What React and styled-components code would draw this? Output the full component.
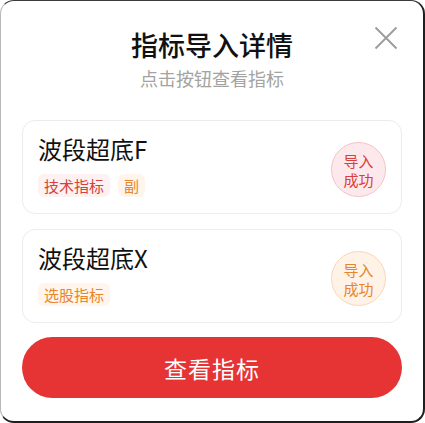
import React from "react";
import styled, { createGlobalStyle } from "styled-components";

const GlobalStyle = createGlobalStyle`
  html, body {
    margin: 0;
    padding: 0;
    background: #ffffff;
  }
  body {
    font-family: "Noto Sans CJK SC", "Noto Sans", sans-serif;
  }
  * {
    box-sizing: border-box;
  }
`;

const Dialog = styled.div`
  width: 425px;
  height: 423px;
  background: #ffffff;
  border-radius: 14px;
  border-style: solid;
  border-width: 1px 2px 2px 1px;
  border-color: #3a3a3a #1f1f1f #1f1f1f #b8b8b8;
  padding: 0 21px;
  display: flex;
  flex-direction: column;
  position: relative;
`;

const Header = styled.div`
  display: flex;
  flex-direction: column;
  align-items: center;
  padding-top: 26px;
`;

const Title = styled.h2`
  margin: 0;
  font-size: 27px;
  line-height: 36px;
  font-weight: 500;
  color: #111111;
`;

const Subtitle = styled.div`
  margin-top: 3px;
  font-size: 18px;
  line-height: 24px;
  color: #a3a3a3;
`;

const CloseButton = styled.button`
  position: absolute;
  top: 24px;
  right: 24px;
  width: 26px;
  height: 26px;
  padding: 0;
  border: none;
  background: transparent;
  display: flex;
  align-items: center;
  justify-content: center;
`;

const List = styled.div`
  margin-top: 30px;
  display: flex;
  flex-direction: column;
  gap: 15px;
`;

const Card = styled.div`
  display: flex;
  align-items: center;
  justify-content: space-between;
  border: 1px solid #ececec;
  border-radius: 13px;
  padding: 13px 15px 16px 15px;
`;

const Info = styled.div`
  display: flex;
  flex-direction: column;
  gap: 10px;
`;

const Name = styled.div`
  font-size: 24px;
  line-height: 30px;
  color: #111111;
`;

const Tags = styled.div`
  display: flex;
  gap: 8px;
`;

const tagColors = {
  red: { bg: "#fdf1f1", fg: "#d8403b" },
  orange: { bg: "#fff5ec", fg: "#e8852c" },
};

const Tag = styled.span`
  height: 23px;
  padding: 0 6px;
  border-radius: 6px;
  font-size: 15px;
  line-height: 23px;
  background: ${(p) => tagColors[p.$tone].bg};
  color: ${(p) => tagColors[p.$tone].fg};
`;

const badgeColors = {
  red: { bg: "#fde9eb", border: "#f2c4c8", fg: "#d8403b" },
  orange: { bg: "#fff2e6", border: "#f7d7b8", fg: "#e8852c" },
};

const Badge = styled.div`
  width: 55px;
  height: 55px;
  margin-top: 8px;
  border-radius: 50%;
  border: 1px solid ${(p) => badgeColors[p.$tone].border};
  background: ${(p) => badgeColors[p.$tone].bg};
  color: ${(p) => badgeColors[p.$tone].fg};
  display: flex;
  flex-direction: column;
  align-items: center;
  justify-content: center;
  font-size: 15px;
  line-height: 19px;
`;

const PrimaryButton = styled.button`
  margin-top: 14px;
  height: 61px;
  width: 100%;
  border: none;
  border-radius: 31px;
  background: #e63333;
  color: #ffffff;
  font-family: inherit;
  font-size: 23px;
  letter-spacing: 1px;
`;

const indicators = [
  {
    name: "波段超底F",
    tags: [
      { label: "技术指标", tone: "red" },
      { label: "副", tone: "orange" },
    ],
    tone: "red",
  },
  {
    name: "波段超底X",
    tags: [{ label: "选股指标", tone: "orange" }],
    tone: "orange",
  },
];

const App = () => {
  return (
    <>
      <GlobalStyle />
      <Dialog>
        <CloseButton aria-label="关闭">
          <svg width="24" height="24" viewBox="0 0 24 24">
            <path
              d="M1.5 1.5 L22.5 22.5 M22.5 1.5 L1.5 22.5"
              stroke="#9b9b9b"
              strokeWidth="1.8"
              fill="none"
            />
          </svg>
        </CloseButton>
        <Header>
          <Title>指标导入详情</Title>
          <Subtitle>点击按钮查看指标</Subtitle>
        </Header>
        <List>
          {indicators.map((item) => (
            <Card key={item.name}>
              <Info>
                <Name>{item.name}</Name>
                <Tags>
                  {item.tags.map((t) => (
                    <Tag key={t.label} $tone={t.tone}>
                      {t.label}
                    </Tag>
                  ))}
                </Tags>
              </Info>
              <Badge $tone={item.tone}>
                <span>导入</span>
                <span>成功</span>
              </Badge>
            </Card>
          ))}
        </List>
        <PrimaryButton>查看指标</PrimaryButton>
      </Dialog>
    </>
  );
};

export default App;
